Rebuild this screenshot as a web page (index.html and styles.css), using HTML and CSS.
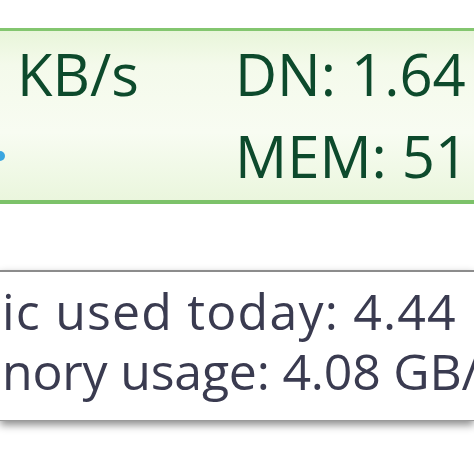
FILE: index.html
```html
<!DOCTYPE html>
<html>
<head>
<meta charset="utf-8">
<link rel="stylesheet" href="styles.css">
</head>
<body>
<div class="page">
  <div class="meter">
    <div class="col col-left">
      <div class="line">KB/s</div>
      <div class="line"><span class="dot"></span></div>
    </div>
    <div class="col col-right">
      <div class="line">DN: 1.64</div>
      <div class="line">MEM: 51</div>
    </div>
  </div>
  <div class="tip">
    <div class="tip-line tip-wide">ic used today: 4.44</div>
    <div class="tip-line tip-tight">nory usage: 4.08 GB/</div>
  </div>
</div>
</body>
</html>
```
FILE: styles.css
```css
html, body {
  margin: 0;
  padding: 0;
  background: #ffffff;
  overflow: hidden;
}
.page {
  width: 474px;
  height: 474px;
  overflow: hidden;
  padding-top: 28px;
  box-sizing: border-box;
  font-family: "Open Sans", "Noto Sans", sans-serif;
}
.meter {
  display: grid;
  grid-template-columns: 235px 1fr;
  border-top: 3px solid #83c66f;
  border-bottom: 4px solid #7cc269;
  background: linear-gradient(#e8f5da 0%, #f4faeb 20%, #f8fcf2 60%, #eaf6dd 100%);
  padding: 2px 0 3px 0;
  color: #0d4a2c;
  font-size: 58px;
  line-height: 82px;
  white-space: nowrap;
}
.col-left {
  padding-left: 17px;
}
.line {
  height: 82px;
  position: relative;
}
.dot {
  position: absolute;
  left: -22px;
  top: 36px;
  width: 10px;
  height: 10px;
  border-radius: 50%;
  background: #3aa6e0;
}
.tip {
  margin-top: 66px;
  border-top: 2px solid #8c8c8c;
  border-bottom: 1px solid #9a9a9a;
  background: #ffffff;
  box-shadow: 0 4px 8px rgba(0, 0, 0, 0.45);
  color: #3a3b50;
  font-size: 50px;
  line-height: 60px;
  padding: 9px 0 19px 2px;
  white-space: nowrap;
  overflow: hidden;
}
.tip-wide {
  letter-spacing: 1.2px;
}
.tip-tight {
  letter-spacing: -0.2px;
}
```
